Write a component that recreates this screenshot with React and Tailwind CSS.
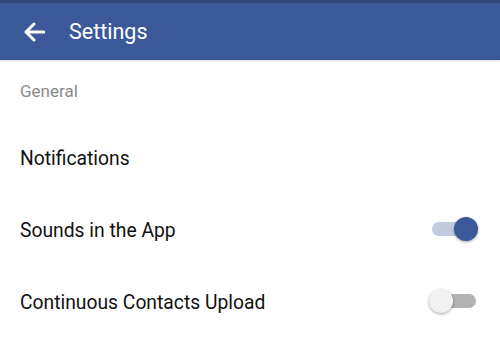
import React, { useState } from "react";

const Toggle = ({ on, onChange }) => (
  <button
    onClick={() => onChange(!on)}
    className="relative w-[44px] h-[26px] flex items-center"
  >
    <span className={`block w-[44px] h-[14px] rounded-full ${on ? "bg-[#c1cbe0]" : "bg-[#b2b2b2]"}`} />
    <span
      className={`absolute top-[1px] w-[24px] h-[24px] rounded-full shadow-[0_1px_3px_rgba(0,0,0,0.35)] ${
        on ? "left-[22px] bg-[#3b5998]" : "left-[-3px] bg-[#f1f1f1]"
      }`}
    />
  </button>
);

const Row = ({ label, children }) => (
  <div className="h-[72px] flex items-center justify-between pl-[20px] pr-[24px]">
    <span className="mt-[4px] text-[19.3px] text-[#111]">{label}</span>
    {children}
  </div>
);

const App = () => {
  const [sounds, setSounds] = useState(true);
  const [contacts, setContacts] = useState(false);

  return (
    <div className="w-[500px] h-[360px] bg-white overflow-hidden font-['Roboto',sans-serif]">
      <header className="h-[60px] border-t-[3px] border-[#2e477a] bg-[#3b5998] flex items-center shadow-[0_1px_2px_rgba(0,0,0,0.15)]">
        <svg width="22" height="20" viewBox="0 0 22 20" className="ml-[23px]" fill="none">
          <path d="M21 10H3M11 2L3 10l8 8" stroke="white" strokeWidth="3" strokeLinecap="round" strokeLinejoin="round" />
        </svg>
        <h1 className="ml-[24px] mt-[2px] text-[21.5px] text-white">Settings</h1>
      </header>
      <div className="h-[61px] flex items-center pl-[20px] pt-[2px] text-[17px] text-[#8a8a8a]">General</div>
      <Row label="Notifications" />
      <Row label="Sounds in the App">
        <Toggle on={sounds} onChange={setSounds} />
      </Row>
      <Row label="Continuous Contacts Upload">
        <Toggle on={contacts} onChange={setContacts} />
      </Row>
    </div>
  );
};

export default App;
